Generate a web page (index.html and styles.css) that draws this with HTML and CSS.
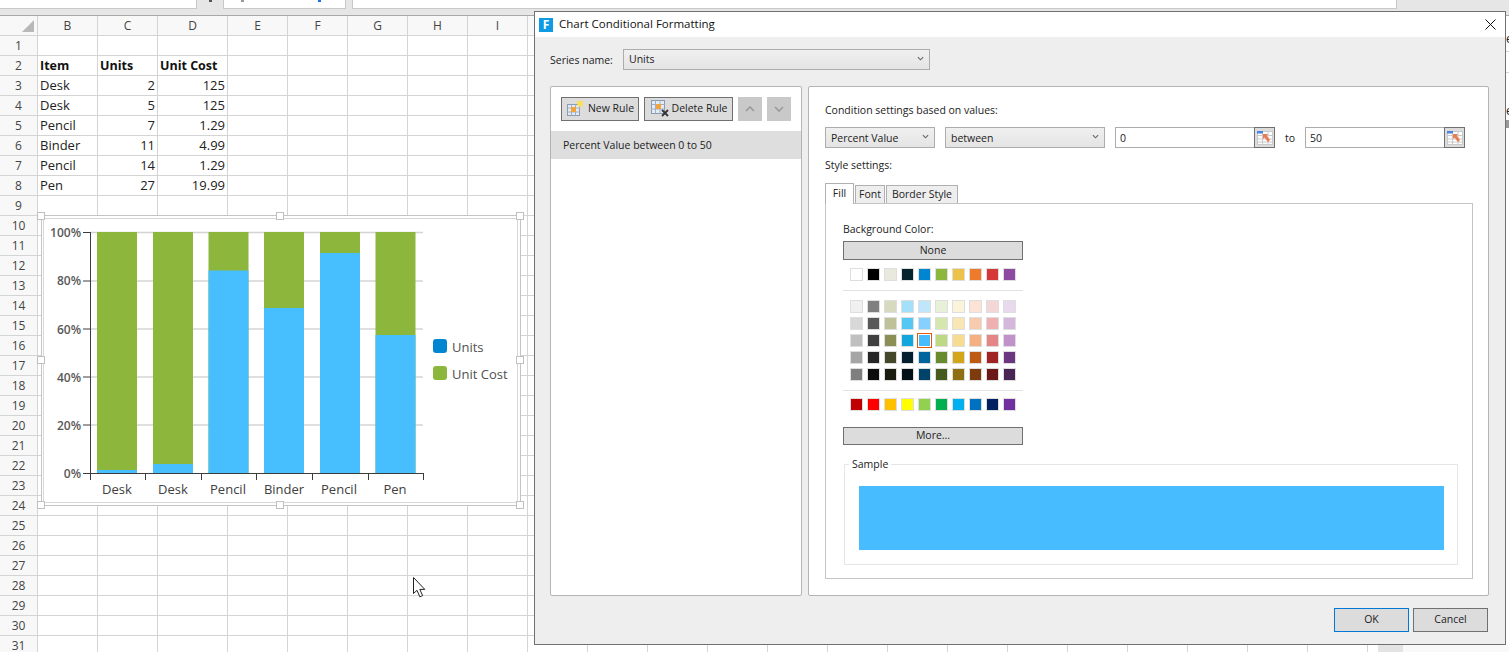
FILE: index.html
```html
<!DOCTYPE html>
<html>

<head>
    <title>Chart Conditional Formatting</title>
    <link rel="stylesheet" href="styles.css">
</head>

<body>
    <div class="topstrip">
        <div class="topbox box1"></div>
        <span class="strip-mark"></span>
        <div class="topbox box2">
            <span class="box-mark gray"></span>
            <span class="box-mark blue"></span>
        </div>
        <div class="topbox box3"></div>
    </div>

    <table class="sheet" id="sheet"></table>

    <svg class="chart" viewBox="36 210 490 300" width="490" height="300">
        <rect x="41.500" y="215.500" width="479" height="290" fill="#fff" stroke="#c4c4c4"/>
        <rect x="43.500" y="218.500" width="474" height="284" fill="#fff" stroke="#d8d8d8"/>
        <g stroke="#d4d4d4" stroke-width="1.500">
            <line x1="90" y1="281" x2="423" y2="281"/>
            <line x1="90" y1="329" x2="423" y2="329"/>
            <line x1="90" y1="377" x2="423" y2="377"/>
            <line x1="90" y1="425" x2="423" y2="425"/>
            <line x1="90" y1="232.500" x2="423" y2="232.500"/>
        </g>
        <g fill="#8cb63c">
            <rect x="97" y="232" width="40" height="241"/>
            <rect x="153" y="232" width="40" height="241"/>
            <rect x="208.500" y="232" width="40" height="241"/>
            <rect x="264" y="232" width="40" height="241"/>
            <rect x="320" y="232" width="40" height="241"/>
            <rect x="375.500" y="232" width="40" height="241"/>
        </g>
        <g fill="#47bfff">
            <rect x="97" y="470" width="40" height="3"/>
            <rect x="153" y="464" width="40" height="9"/>
            <rect x="208.500" y="270.500" width="40" height="202.500"/>
            <rect x="264" y="308" width="40" height="165"/>
            <rect x="320" y="253" width="40" height="220"/>
            <rect x="375.500" y="335" width="40" height="138"/>
        </g>
        <g stroke="#3c3c3c" fill="none">
            <path d="M90.500 232V473M83 232.500H90M83 281H90M83 329H90M83 377H90M83 425H90M83 473.500H424"/>
            <path d="M90.500 473V480M145.500 473V480M201.500 473V480M256.500 473V480M312.500 473V480M368.500 473V480M423.500 473V480"/>
        </g>
        <g class="axis-y" text-anchor="end">
            <text x="81" y="237">100%</text>
            <text x="81" y="285">80%</text>
            <text x="81" y="334">60%</text>
            <text x="81" y="382">40%</text>
            <text x="81" y="430">20%</text>
            <text x="81" y="478">0%</text>
        </g>
        <g class="axis-x" text-anchor="middle">
            <text x="117" y="494">Desk</text>
            <text x="173" y="494">Desk</text>
            <text x="228" y="494">Pencil</text>
            <text x="284" y="494">Binder</text>
            <text x="339" y="494">Pencil</text>
            <text x="395" y="494">Pen</text>
        </g>
        <rect x="433" y="339" width="14" height="14" rx="3" fill="#0085d1"/>
        <rect x="433" y="366" width="14" height="14" rx="3" fill="#8cb63c"/>
        <text class="legend-text" x="452" y="352">Units</text>
        <text class="legend-text" x="452" y="379">Unit Cost</text>
        <g fill="#fff" stroke="#c0c0c0">
            <rect x="37.500" y="212.500" width="7" height="7"/>
            <rect x="276.500" y="212.500" width="7" height="7"/>
            <rect x="516.500" y="212.500" width="7" height="7"/>
            <rect x="37.500" y="356.500" width="7" height="7"/>
            <rect x="516.500" y="356.500" width="7" height="7"/>
            <rect x="37.500" y="501.500" width="7" height="7"/>
            <rect x="276.500" y="501.500" width="7" height="7"/>
            <rect x="516.500" y="501.500" width="7" height="7"/>
        </g>
    </svg>

    <svg class="pointer" viewBox="0 0 13 21" width="13" height="21">
        <path d="M.5 .5V16.500L4 13.300L6.800 19.800L9.600 18.600L6.800 12.400H11.800Z" fill="#fff" stroke="#222" stroke-width="1"/>
    </svg>

    <div class="edge">
        <span class="edge-e e1">e</span>
        <span class="edge-e e2">e</span>
        <div class="edge-line l1"></div>
        <div class="edge-line l2"></div>
        <div class="edge-block"></div>
    </div>
    <div class="bottom-scroll">
        <div class="scroll-gray"></div>
        <div class="scroll-light"></div>
    </div>

    <div class="dialog">
        <div class="titlebar">
            <span class="logo">F</span>
            <span class="title">Chart Conditional Formatting</span>
            <svg class="close" viewBox="0 0 11 11" width="11" height="11">
                <path d="M.5 .5L10.500 10.500M10.500 .5L.5 10.500" stroke="#111" fill="none"/>
            </svg>
        </div>
        <div class="dialog-body">
            <div class="series-row">
                <label>Series name:</label>
                <div class="combo series-combo">Units
                    <svg class="chev" viewBox="0 0 8 5" width="7" height="5"><path d="M1 1L4 4L7 1" stroke="#666" stroke-width="1.300" fill="none"/></svg>
                </div>
            </div>
            <div class="panels">
                <div class="panel rules">
                    <div class="toolbar">
                        <button class="btn tool new-rule">
                            <svg viewBox="0 0 18 18" width="18" height="18">
                                <rect x="1.500" y="5.500" width="12" height="11" fill="#e4ebf4" stroke="#8a9ab0"/>
                                <path d="M1.500 9H13.500M1.500 13H13.500M5.500 5.500V16.500M9.500 5.500V16.500" stroke="#9fb0c6"/>
                                <rect x="5" y="8" width="5" height="5" fill="#f2a33c"/>
                                <path d="M14 0L15 3L18 2L16 5L18 7L15 6.500L14 10L13 6.500L10 7L12 5L10 2L13 3Z" fill="#ffe14a"/>
                            </svg>
                            New Rule
                        </button>
                        <button class="btn tool del-rule">
                            <svg viewBox="0 0 20 19" width="20" height="19">
                                <rect x="1.500" y="1.500" width="13" height="13" fill="#e4ebf4" stroke="#8a9ab0"/>
                                <path d="M1.500 5.500H14.500M1.500 10H14.500M5.500 1.500V14.500M10 1.500V14.500" stroke="#9fb0c6"/>
                                <rect x="6" y="5" width="5" height="5" fill="#f2a33c"/>
                                <path d="M12 11L18 17M18 11L12 17" stroke="#333" stroke-width="1.800"/>
                            </svg>
                            Delete Rule
                        </button>
                        <button class="btn arrow">
                            <svg viewBox="0 0 10 6" width="10" height="6"><path d="M1 5L5 1L9 5" stroke="#9a9a9a" stroke-width="1.600" fill="none"/></svg>
                        </button>
                        <button class="btn arrow">
                            <svg viewBox="0 0 10 6" width="10" height="6"><path d="M1 1L5 5L9 1" stroke="#9a9a9a" stroke-width="1.600" fill="none"/></svg>
                        </button>
                    </div>
                    <div class="rule-row">Percent Value between 0 to 50</div>
                </div>
                <div class="panel settings">
                    <div class="caption">Condition settings based on values:</div>
                    <div class="condition">
                        <div class="combo type-combo">Percent Value
                            <svg class="chev" viewBox="0 0 8 5" width="7" height="5"><path d="M1 1L4 4L7 1" stroke="#666" stroke-width="1.300" fill="none"/></svg>
                        </div>
                        <div class="combo op-combo">between
                            <svg class="chev" viewBox="0 0 8 5" width="7" height="5"><path d="M1 1L4 4L7 1" stroke="#666" stroke-width="1.300" fill="none"/></svg>
                        </div>
                        <div class="range">
                            <div class="range-input">0</div>
                            <div class="range-btn">
                                <svg viewBox="0 0 16 14" width="16" height="14">
                                    <rect x=".5" y=".5" width="15" height="13" fill="#fff" stroke="#c8c8c8"/>
                                    <path d="M0 4.500H16M0 8H16M0 11H16M5.500 0V14M11 0V14" stroke="#c8c8c8"/>
                                    <rect x="0" y="0" width="6" height="2.500" fill="#4a86e0"/>
                                    <path d="M6 3H11L9.500 4.500L13 9L11 11L7.500 6.500L6 8Z" fill="#ea7a50"/>
                                </svg>
                            </div>
                        </div>
                        <span class="to">to</span>
                        <div class="range">
                            <div class="range-input">50</div>
                            <div class="range-btn">
                                <svg viewBox="0 0 16 14" width="16" height="14">
                                    <rect x=".5" y=".5" width="15" height="13" fill="#fff" stroke="#c8c8c8"/>
                                    <path d="M0 4.500H16M0 8H16M0 11H16M5.500 0V14M11 0V14" stroke="#c8c8c8"/>
                                    <rect x="0" y="0" width="6" height="2.500" fill="#4a86e0"/>
                                    <path d="M6 3H11L9.500 4.500L13 9L11 11L7.500 6.500L6 8Z" fill="#ea7a50"/>
                                </svg>
                            </div>
                        </div>
                    </div>
                    <div class="caption style-caption">Style settings:</div>
                    <div class="tabs">
                        <div class="tab active">Fill</div>
                        <div class="tab font-tab">Font</div>
                        <div class="tab border-tab">Border Style</div>
                    </div>
                    <div class="tab-panel">
                        <div class="caption">Background Color:</div>
                        <button class="btn wide none-btn">None</button>
                        <div class="swatches first" id="themeColors"></div>
                        <div class="sep"></div>
                        <div class="swatches" id="tintColors"></div>
                        <div class="sep"></div>
                        <div class="swatches last" id="standardColors"></div>
                        <button class="btn wide more-btn">More...</button>
                        <fieldset class="sample">
                            <legend>Sample</legend>
                            <div class="sample-fill"></div>
                        </fieldset>
                    </div>
                </div>
            </div>
            <div class="footer">
                <button class="btn action ok">OK</button>
                <button class="btn action">Cancel</button>
            </div>
        </div>
    </div>

    <script src="script.js"></script>
</body>

</html>
```

FILE: styles.css
```css
body {
    margin: 0;
    width: 1509px;
    height: 652px;
    overflow: hidden;
    background: #fff;
    font-family: "Open Sans", "Noto Sans", sans-serif;
    font-size: 10.500px;
    color: #222;
    position: relative;
}

.topstrip {
    display: flex;
    height: 16px;
    box-sizing: border-box;
    background: #e6e6e6;
    border-bottom: 1px solid #a8a8a8;
}

.topbox {
    height: 9px;
    box-sizing: border-box;
    background: #fff;
    border-bottom: 1px solid #c8c8c8;
}

.box1 {
    width: 197px;
    border-right: 1px solid #c8c8c8;
}

.strip-mark {
    width: 3px;
    height: 2px;
    margin: 0 11px 0 12px;
    background: #555;
}

.box2 {
    width: 123px;
    border-left: 1px solid #c8c8c8;
    border-right: 1px solid #c8c8c8;
    display: flex;
    justify-content: space-between;
    padding: 0 24px 0 17px;
}

.box-mark {
    width: 3px;
    height: 2px;
}

.gray {
    background: #999;
}

.blue {
    background: #1a73e8;
}

.box3 {
    width: 1045px;
    margin-left: 6px;
    border-left: 1px solid #c8c8c8;
    border-right: 1px solid #c8c8c8;
}

/* spreadsheet */
.sheet {
    border-collapse: separate;
    border-spacing: 0;
    table-layout: fixed;
    width: 1548px;
    font-size: 13px;
    line-height: 16px;
    color: #222;
}

.sheet td,
.sheet th {
    box-sizing: border-box;
    height: 20px;
    padding: 0 2px 2px;
    border-right: 1px solid #d4d4d4;
    border-bottom: 1px solid #d4d4d4;
    white-space: nowrap;
    font-weight: normal;
    text-align: left;
}

.sheet .col-head {
    background: #f8f8f8;
    text-align: center;
    color: #444;
    font-size: 12px;
    padding: 0;
}

.sheet .row-head {
    background: #f8f8f8;
    text-align: center;
    color: #444;
    font-size: 12px;
    padding: 0;
}

.sheet .corner {
    background: #f8f8f8;
    position: relative;
    padding: 0;
}

.corner::after {
    content: "";
    position: absolute;
    right: 3px;
    bottom: 3px;
    border-style: solid;
    border-width: 0 0 12px 12px;
    border-color: transparent transparent #b8b8b8 transparent;
}

.sheet .num {
    text-align: right;
}

.sheet .head {
    font-weight: bold;
    font-size: 12.500px;
    color: #111;
    padding: 0 2px;
}

/* things lying over the cells */
.chart {
    position: absolute;
    left: 36px;
    top: 210px;
}

.chart text {
    font-family: "Open Sans", "Noto Sans", sans-serif;
    font-size: 12px;
}

.axis-y text {
    fill: #595959;
    font-weight: 600;
}

.chart .axis-x text {
    fill: #404040;
    font-size: 13px;
}

.chart .legend-text {
    fill: #505050;
    font-size: 13px;
}

.pointer {
    position: absolute;
    left: 413px;
    top: 577px;
}

.edge {
    position: absolute;
    right: 0;
    top: 16px;
    width: 4px;
    height: 628px;
    background: #fff;
    overflow: hidden;
}

.edge-e {
    position: absolute;
    left: 1px;
    font-size: 12px;
    color: #222;
}

.e1 {
    top: 14px;
}

.e2 {
    top: 86px;
}

.edge-line {
    position: absolute;
    left: 0;
    width: 4px;
    height: 1px;
    background: #d4d4d4;
}

.l1 {
    top: 35px;
}

.l2 {
    top: 56px;
}

.edge-block {
    position: absolute;
    left: 1px;
    top: 104px;
    width: 3px;
    height: 8px;
    background: #999;
}

.bottom-scroll {
    position: absolute;
    right: 0;
    bottom: 0;
    display: flex;
    width: 131px;
    height: 8px;
}

.scroll-gray {
    width: 25px;
    background: #e4e4e4;
}

.scroll-light {
    flex: 1;
    background: #f9f9f9;
}

/* dialog window */
.dialog {
    position: absolute;
    left: 534px;
    top: 11px;
    width: 972px;
    height: 634px;
    box-sizing: border-box;
    border: 1px solid #707070;
    background: #eee;
    display: flex;
    flex-direction: column;
}

.titlebar {
    height: 25px;
    flex: none;
    background: #fff;
    display: flex;
    align-items: center;
    padding: 0 9px 0 4px;
}

.logo {
    width: 14px;
    height: 14px;
    background: #0f9be3;
    color: #fff;
    font-weight: bold;
    font-size: 12px;
    line-height: 14px;
    text-align: center;
}

.title {
    margin-left: 6px;
    padding-bottom: 2px;
    font-size: 11.500px;
    color: #111;
    flex: 1;
}

.dialog-body {
    flex: 1;
    padding: 12px 16px 0 15px;
}

.series-row {
    display: flex;
    align-items: center;
    height: 21px;
}

.series-row label {
    width: 73px;
}

.combo {
    position: relative;
    box-sizing: border-box;
    height: 21px;
    line-height: 18px;
    padding-left: 5px;
    border: 1px solid #acacac;
    background: linear-gradient(#f0f0f0, #e4e4e4);
}

.chev {
    position: absolute;
    right: 5px;
    top: 6px;
}

.series-combo {
    width: 307px;
}

.panels {
    display: flex;
    gap: 6px;
    margin-top: 16px;
}

.panel {
    box-sizing: border-box;
    flex: none;
    height: 510px;
    background: #fff;
    border: 1px solid #b4b4b4;
    border-radius: 2px;
}

.rules {
    width: 252px;
    padding-top: 10px;
}

.settings {
    width: 681px;
    padding: 16px 16px 0;
}

.toolbar {
    display: flex;
    gap: 5px;
    padding-left: 10px;
}

.btn {
    box-sizing: border-box;
    font-family: inherit;
    font-size: 10.500px;
    color: #222;
    background: #dcdcdc;
    border: 1px solid #707070;
    padding: 0 0 2px;
    margin: 0;
}

.tool {
    display: flex;
    align-items: center;
    justify-content: center;
    height: 24px;
    gap: 4px;
    border-width: 1.500px;
}

.new-rule {
    width: 78px;
}

.del-rule {
    width: 89px;
    gap: 2px;
}

.arrow {
    width: 24px;
    height: 24px;
    background: #c9c9c9;
    border: 0;
}

.rule-row {
    margin-top: 10px;
    height: 28px;
    line-height: 28px;
    padding-left: 12px;
    background: #dedede;
}

.caption {
    height: 15px;
    line-height: 15px;
}

.condition {
    display: flex;
    align-items: center;
    margin-top: 9px;
}

.condition .combo {
    line-height: 20px;
}

.type-combo {
    width: 110px;
}

.op-combo {
    width: 160px;
    margin-left: 10px;
}

.range {
    display: flex;
    margin-left: 10px;
}

.range-input {
    box-sizing: border-box;
    width: 139px;
    height: 21px;
    line-height: 20px;
    padding-left: 4px;
    border: 1px solid #acacac;
    border-right: 0;
}

.range-btn {
    box-sizing: border-box;
    width: 21px;
    height: 21px;
    background: #dcdcdc;
    border: 1px solid #707070;
    display: flex;
    align-items: center;
    justify-content: center;
}

.to {
    margin-left: 10px;
    width: 10px;
}

.style-caption {
    margin-top: 10px;
}

.tabs {
    display: flex;
    align-items: flex-end;
    margin-top: 10px;
    height: 20px;
}

.tab {
    box-sizing: border-box;
    height: 18px;
    line-height: 16px;
    text-align: center;
    background: #eee;
    border: 1px solid #b0b0b0;
    border-bottom: 0;
    margin-right: 1px;
}

.tab.active {
    height: 21px;
    width: 29px;
    line-height: 19px;
    background: #fff;
    margin-bottom: -1px;
    position: relative;
    margin-right: 1px;
}

.font-tab {
    width: 30px;
}

.border-tab {
    width: 72px;
}

.tab-panel {
    box-sizing: border-box;
    width: 648px;
    height: 376px;
    padding: 18px 14px 0 17px;
    border: 1px solid #c4c4c4;
}

.wide {
    display: block;
    width: 180px;
}

.none-btn {
    height: 19px;
    margin-top: 4px;
}

.swatches {
    display: grid;
    grid-template-columns: repeat(10, 13px);
    gap: 4px;
    padding-left: 7px;
}

.swatch {
    box-sizing: border-box;
    width: 13px;
    height: 13px;
    border: 1px solid #dedede;
}

.swatch.current {
    border-color: #fff;
    box-shadow: 0 0 0 1px #e25a0c;
}

.first {
    margin-top: 8px;
}

.sep {
    width: 180px;
    height: 1px;
    background: #e2e2e2;
    margin: 9px 0;
}

.last {
    margin-top: -2px;
}

.more-btn {
    height: 18px;
    margin-top: 16px;
}

.sample {
    box-sizing: border-box;
    height: 108px;
    margin: 12px 0 0 1px;
    padding: 14px 13px 13px 14px;
    border: 1px solid #e6e6e6;
    min-width: 0;
}

.sample legend {
    padding: 0 3px;
    margin-left: -10px;
    line-height: 15px;
}

.sample-fill {
    height: 64px;
    background: #47bdff;
}

.footer {
    display: flex;
    justify-content: flex-end;
    gap: 4px;
    margin: 12px 1px 0 0;
}

.action {
    width: 75px;
    height: 24px;
    border-width: 1.500px;
}

.ok {
    border-color: #0078d7;
}
```

FILE: script.js
```js
const widths = [38, 60, 60, 70];
const letters = "ABCDEFGHI";
const totalCols = 26;

const cells = {
    2: ["Item", "Units", "Unit Cost"],
    3: ["Desk", 2, 125],
    4: ["Desk", 5, 125],
    5: ["Pencil", 7, "1.29"],
    6: ["Binder", 11, "4.99"],
    7: ["Pencil", 14, "1.29"],
    8: ["Pen", 27, "19.99"]
};

function buildSheet() {
    const sheet = document.getElementById("sheet");
    const colgroup = document.createElement("colgroup");
    for (let c = 0; c < totalCols; c++) {
        const col = document.createElement("col");
        col.width = widths[c] || 60;
        colgroup.appendChild(col);
    }
    sheet.appendChild(colgroup);

    const head = document.createElement("tr");
    head.innerHTML = `<th class="corner"></th>`;
    for (let c = 1; c < totalCols; c++) {
        // the columns after I sit behind the dialog
        head.innerHTML += `<th class="col-head">${letters[c] || ""}</th>`;
    }
    sheet.appendChild(head);

    for (let r = 1; r <= 31; r++) {
        const tr = document.createElement("tr");
        tr.innerHTML = `<td class="row-head">${r}</td>`;
        const values = cells[r] || [];
        for (let c = 0; c < totalCols - 1; c++) {
            const v = values[c];
            const td = document.createElement("td");
            if (v !== undefined) {
                td.textContent = v;
                if (r === 2) td.className = "head";
                else if (c > 0) td.className = "num";
            }
            tr.appendChild(td);
        }
        sheet.appendChild(tr);
    }
}

const theme = ["#ffffff", "#000000", "#e9e9df", "#05232e", "#0085d1", "#8cb63c", "#ecc24a", "#ee7b2b", "#d63838", "#8e4aa3"];
const tints = [
    "#f0f0f0", "#808080", "#d7dabf", "#a5e0fa", "#c0e6fc", "#e9f0d8", "#fbf3da", "#fce3d5", "#f4d6d6", "#e8d9ec",
    "#d8d8d8", "#595959", "#bfc19a", "#54c7f3", "#85d0fe", "#d5e6ae", "#f8e7b4", "#f8cbae", "#eeb0b0", "#d3b7dc",
    "#bfbfbf", "#3f3f3f", "#8c8f55", "#12a6df", "#47bdff", "#bdd983", "#f6db90", "#f4b080", "#e68585", "#bf92cb",
    "#a5a5a5", "#262626", "#45482a", "#04202e", "#00659c", "#698a2d", "#d3a518", "#bf5a15", "#a12424", "#6a3780",
    "#7f7f7f", "#0c0c0c", "#1b1c10", "#021118", "#004368", "#465b1e", "#8d6e10", "#7e3b0e", "#6b1818", "#472555"
];
const standard = ["#c00000", "#ff0000", "#ffc000", "#ffff00", "#92d050", "#00b050", "#00b0f0", "#0070c0", "#002060", "#7030a0"];

function fillSwatches(id, colors, current) {
    const box = document.getElementById(id);
    colors.forEach((color, i) => {
        const s = document.createElement("div");
        s.className = i === current ? "swatch current" : "swatch";
        s.style.background = color;
        box.appendChild(s);
    });
}

buildSheet();
fillSwatches("themeColors", theme, -1);
fillSwatches("tintColors", tints, 24);
fillSwatches("standardColors", standard, -1);
```
